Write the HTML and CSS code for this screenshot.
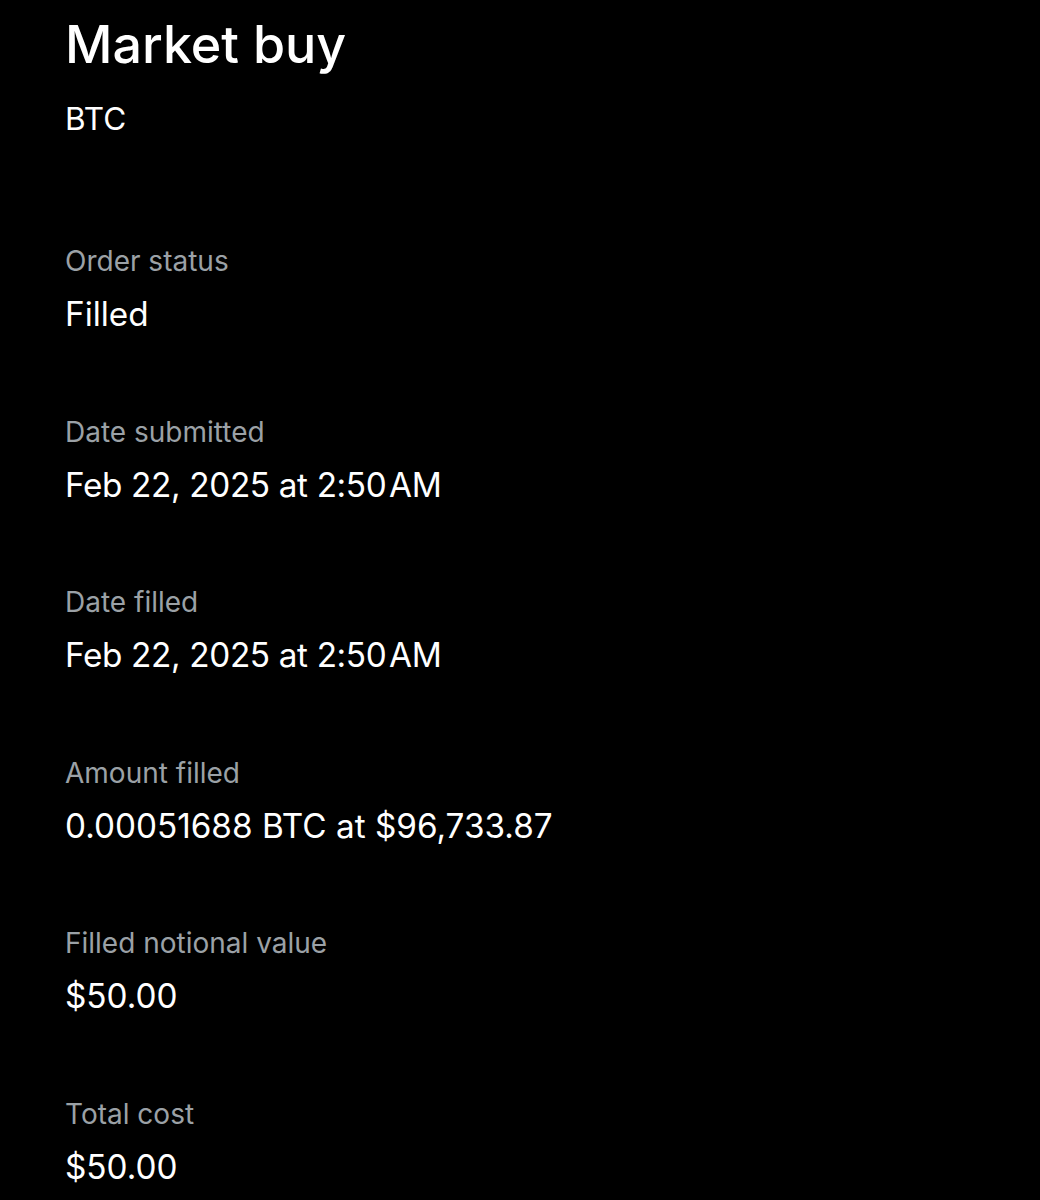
FILE: index.html
```html
<!DOCTYPE html>
<html lang="en">
<head>
    <meta charset="UTF-8">
    <meta name="viewport" content="width=device-width, initial-scale=1.0">
    <title>Market buy</title>
    <link rel="stylesheet" href="styles.css">
</head>
<body>
    <div class="container">
        <h1>Market buy</h1>
        <div class="symbol">BTC</div>

        <div class="details">
            <div class="field">
                <div class="label">Order status</div>
                <div class="value">Filled</div>
            </div>
            <div class="field">
                <div class="label">Date submitted</div>
                <div class="value date">Feb 22, 2025 at 2:50&#8202;AM</div>
            </div>
            <div class="field">
                <div class="label">Date filled</div>
                <div class="value date">Feb 22, 2025 at 2:50&#8202;AM</div>
            </div>
            <div class="field">
                <div class="label">Amount filled</div>
                <div class="value">0.00051688 BTC at $96,733.87</div>
            </div>
            <div class="field">
                <div class="label">Filled notional value</div>
                <div class="value">$50.00</div>
            </div>
            <div class="field">
                <div class="label">Total cost</div>
                <div class="value">$50.00</div>
            </div>
        </div>
    </div>
</body>
</html>
```

FILE: styles.css
```css
body {
    margin: 0;
    padding: 0;
    background-color: #000;
    color: #fff;
    font-family: Inter, 'Noto Sans', sans-serif;
    min-height: 100vh;
}
.container {
    padding: 15px 65px 0;
}
h1 {
    margin: 0;
    font-size: 52px;
    font-weight: 500;
    line-height: 60px;
}
.symbol {
    margin-top: 26px;
    font-size: 31.5px;
    line-height: 36px;
}
.details {
    display: flex;
    flex-direction: column;
    gap: 81.5px;
    margin-top: 106px;
}
.field {
    display: flex;
    flex-direction: column;
    gap: 17px;
}
.label {
    color: #9ba1a6;
    font-size: 28px;
    line-height: 36px;
}
.value {
    font-size: 33.3px;
    line-height: 36px;
}
.date {
    letter-spacing: -0.35px;
}
```
